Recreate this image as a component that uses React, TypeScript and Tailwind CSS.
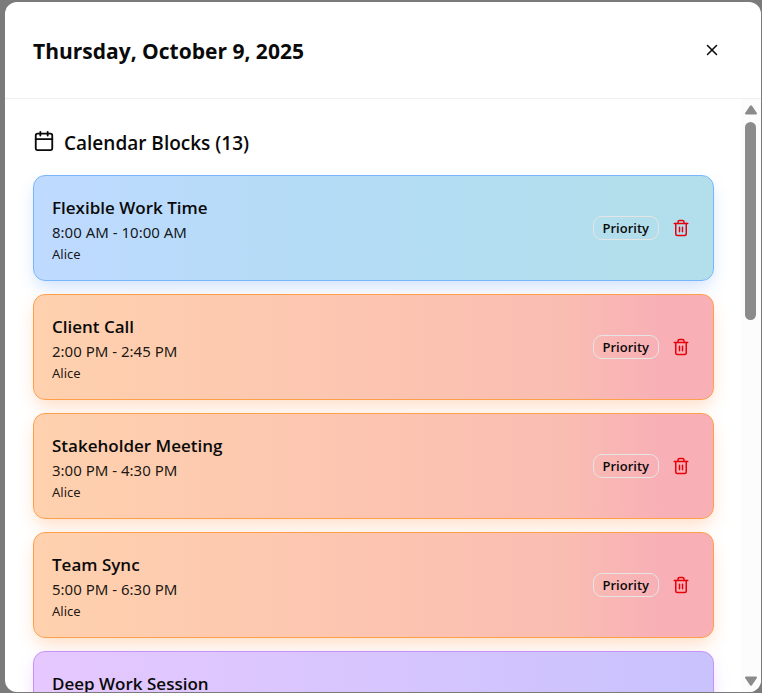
import React from "react";
import { Calendar, X } from "lucide-react";

type Tone = "blue" | "orange" | "purple";

interface Block {
  title: string;
  time: string;
  owner: string;
  tone: Tone;
}

const blocks: Block[] = [
  { title: "Flexible Work Time", time: "8:00 AM - 10:00 AM", owner: "Alice", tone: "blue" },
  { title: "Client Call", time: "2:00 PM - 2:45 PM", owner: "Alice", tone: "orange" },
  { title: "Stakeholder Meeting", time: "3:00 PM - 4:30 PM", owner: "Alice", tone: "orange" },
  { title: "Team Sync", time: "5:00 PM - 6:30 PM", owner: "Alice", tone: "orange" },
  { title: "Deep Work Session", time: "7:00 PM - 8:30 PM", owner: "Alice", tone: "purple" },
];

const tones: Record<Tone, string> = {
  blue: "border-[#7ab5fb] bg-linear-to-r from-[#bfdaff] via-[#b3dcf5] via-45% to-[#b2dfea] shadow-blue-500/25",
  orange:
    "border-[#ff9f4a] bg-linear-to-r from-[#ffd1ae] via-[#fabdb2] via-78% to-[#f8b0b6] to-92% shadow-orange-500/25",
  purple: "border-[#c592f8] bg-linear-to-r from-[#e6c8ff] to-[#c8c2fd] shadow-purple-500/25",
};

function TrashIcon() {
  return (
    <svg
      viewBox="0 0 24 24"
      className="size-[18px]"
      fill="none"
      stroke="currentColor"
      strokeWidth="2"
      strokeLinecap="round"
      strokeLinejoin="round"
      aria-hidden="true"
    >
      <path d="M3 6h18" />
      <path d="M19 6v14a2 2 0 0 1-2 2H7a2 2 0 0 1-2-2V6" />
      <path d="M8 6V4a2 2 0 0 1 2-2h4a2 2 0 0 1 2 2v2" />
      <path d="M10 11v6M14 11v6" />
    </svg>
  );
}

function BlockCard({ block }: { block: Block }) {
  return (
    <li
      className={`flex h-[106px] shrink-0 items-center justify-between rounded-xl border pr-[15px] pl-[18px] shadow-[0_8px_18px_-3px] ${tones[block.tone]}`}
    >
      <div className="pt-1">
        <h3 className="text-[17px] leading-[26px] font-semibold">{block.title}</h3>
        <p className="font-['Noto_Sans',sans-serif] text-[15px] leading-[22px] text-black/90">{block.time}</p>
        <p className="font-['Noto_Sans',sans-serif] text-[13px] leading-[22px] text-black/90">{block.owner}</p>
      </div>
      <div className="flex items-center gap-[5px]">
        <span className="flex h-6 items-center rounded-[9px] border border-[#e5e5e5] px-[9px] pt-[2px] text-[13px] font-semibold">
          Priority
        </span>
        <button type="button" aria-label={`Delete ${block.title}`} className="grid size-[34px] place-items-center text-[#e7000b]">
          <TrashIcon />
        </button>
      </div>
    </li>
  );
}

function ScrollBar() {
  return (
    <div className="flex w-5 shrink-0 flex-col items-center bg-[#fcfcfc] py-[6px] pr-px" aria-hidden="true">
      <svg viewBox="0 0 12 10" className="h-[10px] w-3 text-[#8b8b8b]" fill="currentColor">
        <path d="M5 .8a1.3 1.3 0 0 1 2 0l4.700 6.900A1.200 1.200 0 0 1 10.800 9.500H1.200A1.200 1.200 0 0 1 .3 7.700z" />
      </svg>
      <div className="mt-[7px] h-[34%] w-[11px] rounded-full bg-[#8b8b8b]" />
      <svg viewBox="0 0 12 10" className="mt-auto h-[10px] w-3 rotate-180 text-[#8b8b8b]" fill="currentColor">
        <path d="M5 .8a1.3 1.3 0 0 1 2 0l4.700 6.900A1.200 1.200 0 0 1 10.800 9.500H1.200A1.200 1.200 0 0 1 .3 7.700z" />
      </svg>
    </div>
  );
}

export default function App() {
  return (
    <div className="h-screen bg-[#7b7b7b] pt-[2px] pr-px pb-px pl-[5px] font-['Open_Sans','Noto_Sans',sans-serif] text-[#0a0a0a]">
      <main role="dialog" aria-labelledby="dialog-title" className="flex h-full flex-col overflow-hidden rounded-xl bg-white">
        <header className="flex h-[97px] shrink-0 items-center justify-between border-b border-[#efefef] pr-8 pl-7">
          <h1 id="dialog-title" className="pt-[2px] text-[21px] leading-8 font-bold">
            Thursday, October 9, 2025
          </h1>
          <button type="button" aria-label="Close" className="grid size-[34px] place-items-center">
            <X className="size-[18px]" />
          </button>
        </header>
        <div className="flex min-h-0 flex-1">
          <section className="flex min-w-0 flex-1 flex-col overflow-y-auto pt-7 pr-[27px] pl-7 [scrollbar-width:none]">
            <h2 className="mb-[15px] flex shrink-0 items-start gap-[9px] text-[19px] leading-[33px] font-semibold">
              <Calendar className="mt-[3px] size-[22px]" />
              Calendar Blocks (13)
            </h2>
            <ul className="flex flex-col gap-[13px]">
              {blocks.map((block) => (
                <BlockCard key={block.title} block={block} />
              ))}
            </ul>
          </section>
          <ScrollBar />
        </div>
      </main>
    </div>
  );
}
